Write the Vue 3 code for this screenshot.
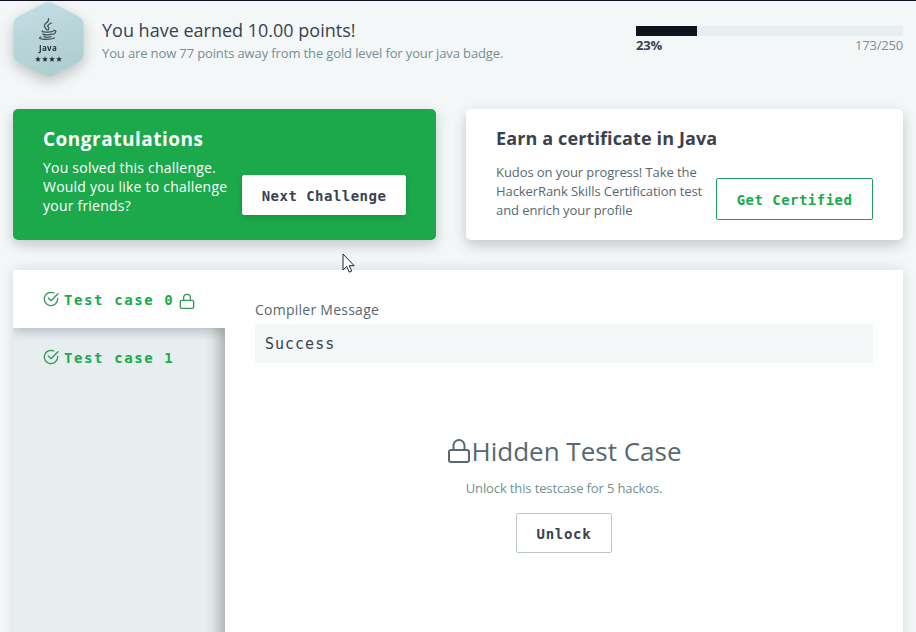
<script setup>
const percent = 23
const tests = [
  { name: 'Test case 0', locked: true, active: true },
  { name: 'Test case 1', locked: false, active: false },
]
</script>

<template>
  <main class="page">
    <header class="progress-head">
      <div class="badge">
        <svg width="71" height="75" viewBox="0 0 71 75">
          <defs>
            <linearGradient id="badge-fill" x1="0.3" y1="0" x2="0.6" y2="1">
              <stop offset="0" stop-color="#c3dce4" />
              <stop offset="1" stop-color="#aecdcd" />
            </linearGradient>
          </defs>
          <path d="M31 1.2Q35.500 -1 40 1.200L65 14Q70.500 17 70.500 22V52Q70.500 57 66 60L41 73Q35.500 76 30 73L5 60Q.5 57 .5 52V22Q.5 17 6 14Z" fill="url(#badge-fill)" />
          <g transform="translate(-1 1)" fill="none" stroke="#43525a" stroke-width="1.300" stroke-linecap="round">
            <path d="M36.500 15.500c1.500 4-6.500 5-3.500 9 .6.900 1.300 1.300 1.700 2.300M39.500 20c-4 1.700-4.500 3-3 4.500.8 1 .3 1.700-.5 2.500" />
            <path d="M30.500 28c-2.500 1 8 1.700 10.500.2M31 31c1 1.300 6.500 1.200 9 .2M32 33.500c1.500 1 5 .8 7 .2M42 27.500c3-.5 2 3-1 3.800M29 34.200c-6 2 9 3.200 13.500.8" />
          </g>
        </svg>
        <div class="badge-text">
          <b>Java</b>
          <div class="stars">
            <svg v-for="n in 4" :key="n" width="6" height="6" viewBox="0 0 24 24"><path d="M12 1l3.300 7.500 8 .8-6 5.500 1.700 8.200-7-4.200L5 23l1.700-8.200-6-5.500 8-.8z" fill="#27343d" /></svg>
          </div>
        </div>
      </div>
      <div class="points">
        <h1>You have earned 10.00 points!</h1>
        <p>You are now 77 points away from the gold level for your java badge.</p>
      </div>
      <div class="meter">
        <div class="track"><div class="fill" :style="{ width: percent + '%' }"></div></div>
        <div class="meter-labels"><b>{{ percent }}%</b><span>173/250</span></div>
      </div>
    </header>

    <section class="cards">
      <article class="card congrats">
        <h2>Congratulations</h2>
        <div class="card-row">
          <p>You solved this challenge.<br>Would you like to challenge<br>your friends?</p>
          <button class="btn next">Next Challenge</button>
        </div>
      </article>
      <article class="card certificate">
        <h2>Earn a certificate in Java</h2>
        <div class="card-row">
          <p>Kudos on your progress! Take the<br>HackerRank Skills Certification test<br>and enrich your profile</p>
          <button class="btn certified">Get Certified</button>
        </div>
      </article>
    </section>

    <section class="results">
      <nav class="tabs">
        <div v-for="t in tests" :key="t.name" class="tab" :class="{ active: t.active }">
          <svg class="check" width="16" height="16" viewBox="0 0 24 24"><path d="M22 11v1a10 10 0 1 1-5.900-9.100M22.500 4 12 14.500l-4-4" /></svg>
          <span>{{ t.name }}</span>
          <svg v-if="t.locked" class="lock" width="16" height="16" viewBox="0 0 24 24"><rect x="2" y="11" width="20" height="12" rx="2" /><path d="M7 11V7a5 5 0 0 1 10 0v4" /></svg>
        </div>
      </nav>
      <div class="output">
        <h3>Compiler Message</h3>
        <pre>Success</pre>
        <div class="hidden-case">
          <h4>
            <svg class="big-lock" width="24" height="26" viewBox="0 0 24 26"><rect x="2" y="12" width="20" height="12" rx="2" /><path d="M6.500 12V7.500a5.500 5.500 0 0 1 11 0V12" /></svg>
            <span>Hidden Test Case</span>
          </h4>
          <p>Unlock this testcase for 5 hackos.</p>
          <button class="btn unlock">Unlock</button>
        </div>
      </div>
    </section>

    <svg class="cursor" width="14" height="21" viewBox="0 0 14 21"><path d="M1 1v16l3.700-3.500 2.600 5.700 2.500-1.200-2.600-5.300h5z" fill="#fff" stroke="#20242b" /></svg>
  </main>
</template>

<style>
body { margin: 0; overflow: hidden; background: #f3f7f7; }
</style>

<style scoped>
* { box-sizing: border-box; }
h1, h2, h3, h4, p, pre { margin: 0; font-weight: 400; }
.page {
  position: relative;
  height: 632px;
  overflow: hidden;
  border-top: 1px solid #10101f;
  padding: 0 13px;
  background: #f3f7f8;
  font-family: "Open Sans", sans-serif;
  color: #39424e;
  display: flex;
  flex-direction: column;
}
.progress-head { height: 108px; flex: none; display: flex; align-items: flex-start; }
.badge { display: grid; margin-top: 1px; width: 71px; height: 75px; filter: drop-shadow(0 5px 7px rgba(0, 0, 0, .22)); }
.badge > svg, .badge-text { grid-area: 1 / 1; }
.badge-text { padding: 40px 1px 0 0; text-align: center; font-size: 8px; line-height: 12px; letter-spacing: .3px; color: #27343d; }
.badge-text b { display: block; }
.stars { display: flex; gap: 1px; justify-content: center; line-height: 0; padding-top: 2px; }
.points { margin-left: 18px; width: 534px; padding-top: 16px; }
.points h1 { font-size: 18px; line-height: 27px; white-space: nowrap; }
.points p { font-size: 13px; line-height: 18px; letter-spacing: -.13px; color: #738f93; white-space: nowrap; }
.meter { width: 267px; margin-top: 25px; flex: none; }
.track { height: 10px; background: #e7eeef; }
.fill { height: 10px; background: #0e141e; }
.meter-labels { display: flex; justify-content: space-between; font-size: 13px; line-height: 18px; letter-spacing: -.2px; }
.meter-labels span { color: #7c8e94; }

.cards { display: flex; gap: 30px; height: 131px; flex: none; }
.card { border-radius: 5px; padding: 17px 30px 0; box-shadow: 0 5px 14px rgba(0, 0, 0, .2); }
.card h2 { font-weight: 700; line-height: 26px; white-space: nowrap; }
.card-row { display: flex; align-items: flex-start; justify-content: space-between; }
.card p { line-height: 19px; white-space: nowrap; }
.congrats { width: 423px; background: #1ba94c; color: #fff; }
.congrats h2 { font-size: 19px; letter-spacing: .5px; }
.congrats p { font-size: 14px; padding-top: 6px; letter-spacing: .22px; }
.certificate { width: 437px; background: #fff; padding-top: 16px; }
.certificate h2 { font-size: 18px; letter-spacing: .12px; }
.certificate p { font-size: 13px; padding-top: 12px; letter-spacing: -.08px; color: #576871; }
.btn {
  height: 40px;
  padding: 2px 0 0;
  border-radius: 2px;
  border: 1px solid #fff;
  background: #fff;
  color: #39424e;
  font: 700 14px/36px "DejaVu Sans Mono", monospace;
  letter-spacing: .47px;
  white-space: nowrap;
}
.next { width: 164px; margin-top: 23px; box-shadow: 0 2px 6px rgba(0, 0, 0, .15); }
.certified { width: 157px; height: 42px; margin-top: 27px; border-color: #1ba160; color: #1ba94c; }

.results { flex: none; height: 400px; margin-top: 30px; display: flex; background: #fff; border-radius: 4px; box-shadow: 0 0 14px rgba(0, 0, 0, .12); }
.tabs { width: 212px; background: #e7eeef; box-shadow: inset -14px 0 14px -8px rgba(0, 0, 0, .28); }
.tab { height: 58px; padding-left: 30px; display: flex; align-items: center; color: #1ba94c; font: 700 14px/20px "DejaVu Sans Mono", monospace; letter-spacing: 1.6px; }
.tab span { margin-left: 5px; width: 115px; padding-top: 2px; white-space: nowrap; }
.tab svg { fill: none; stroke: #35995b; stroke-width: 2; stroke-linecap: round; stroke-linejoin: round; }
.tab .lock { margin-top: 3px; }
.tab.active { width: 213px; background: #fff; box-shadow: 0 4px 10px rgba(0, 0, 0, .2); clip-path: inset(0 0 -16px 0); }
.output { flex: 1; padding: 30px; background: #fff; position: relative; }
.output h3 { font-size: 14px; line-height: 20px; letter-spacing: .25px; color: #576871; }
.output pre { margin-top: 4px; height: 39px; padding-left: 10px; background: #f3f7f8; font: 15px/40px "DejaVu Sans Mono", monospace; letter-spacing: 1px; }
.hidden-case { margin-top: 68px; display: flex; flex-direction: column; align-items: center; }
.hidden-case h4 { display: flex; align-items: center; height: 40px; font-size: 26px; line-height: 40px; color: #576871; white-space: nowrap; }
.big-lock { fill: none; stroke: #576871; stroke-width: 2; margin-right: 1px; }
.hidden-case p { margin-top: 7px; font-size: 13px; line-height: 20px; letter-spacing: -.13px; color: #738f8f; }
.unlock { width: 96px; margin-top: 15px; border-color: #b9c5c8; letter-spacing: .7px; }
.cursor { position: absolute; left: 342px; top: 252px; }
</style>
